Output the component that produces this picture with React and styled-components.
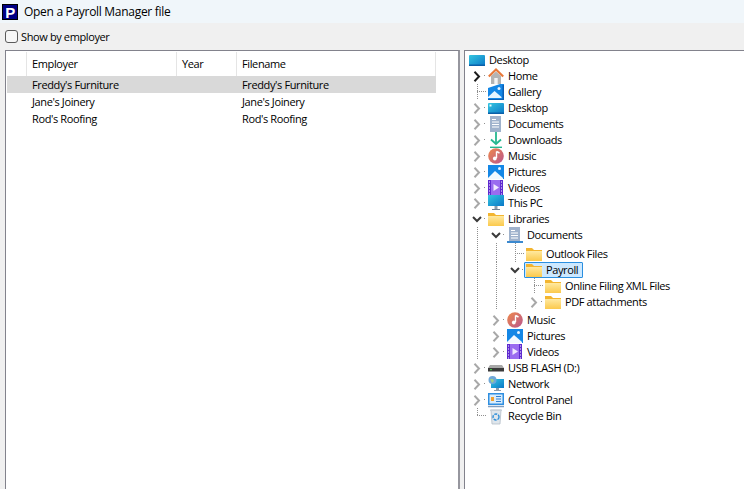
import React from "react";
import styled, { createGlobalStyle } from "styled-components";

const Global = createGlobalStyle`
  html, body { margin: 0; padding: 0; background: #f0f0f0; overflow: hidden; }
  #root { height: 489px; }
`;

const dotsV = "repeating-linear-gradient(to bottom, #8f8f8f 0 1px, transparent 1px 2px)";
const dotsH = "repeating-linear-gradient(to right, #8f8f8f 0 1px, transparent 1px 2px)";

const Window = styled.div`
  width: 744px;
  height: 489px;
  display: flex;
  flex-direction: column;
  overflow: hidden;
  background: #f0f0f0;
  color: #000;
  font-family: "Open Sans", "Noto Sans", sans-serif;
  font-size: 11px;
  letter-spacing: -0.38px;
`;
const TitleBar = styled.div`
  height: 23px;
  flex: none;
  display: flex;
  align-items: center;
  gap: 6px;
  padding-left: 2px;
  background: #f0f6fa;
  font-size: 12px;
  letter-spacing: -0.3px;
`;
const AppLogo = styled.div`
  width: 16px;
  height: 16px;
  background: #000084;
  color: #fff;
  font-family: "Liberation Sans", sans-serif;
  font-weight: 700;
  font-size: 15px;
  line-height: 15px;
  text-align: center;
  box-sizing: border-box;
  border: 1px solid #000;
`;
const Toolbar = styled.label`
  height: 27px;
  flex: none;
  display: flex;
  align-items: center;
  gap: 3px;
  padding-left: 5px;
`;
const Check = styled.input`
  appearance: none;
  width: 13px;
  height: 13px;
  margin: 0;
  box-sizing: border-box;
  border: 1px solid #5a5a5a;
  border-radius: 3px;
  background: #f6f6f6;
`;
const Panes = styled.div`
  flex: 1;
  min-height: 0;
  display: flex;
  gap: 4px;
  padding-left: 5px;
`;
const ListPane = styled.div`
  width: 455px;
  flex: none;
  box-sizing: border-box;
  background: #fff;
  border: solid #82828c;
  border-width: 1px 0 0 1px;
  border-right: 2px solid #96969e;
  padding: 1px 0 0 1px;
`;
const TreePane = styled.div`
  flex: 1;
  background: #fff;
  border: solid #82828c;
  border-width: 1px 0 0 1px;
  padding: 1px 0 0 2px;
`;
const ListRow = styled.div`
  display: grid;
  grid-template-columns: 20px 150px 60px 199px;
  width: 429px;
  height: ${p => (p.$head ? "24px" : "17px")};
  align-items: center;
  background: ${p => (p.$selected ? "#d9d9d9" : "transparent")};
`;
const Cell = styled.div`
  height: 100%;
  display: flex;
  align-items: center;
  box-sizing: border-box;
  padding-left: 5px;
  padding-bottom: ${p => (p.$head ? "2px" : "0")};
  border-right: ${p => (p.$head ? "1px solid #e5e5e5" : "0")};
`;
const TreeRow = styled.div`
  display: flex;
  height: ${p => p.$h}px;
`;
const Guide = styled.span`
  width: 19px;
  flex: none;
  background: ${dotsV} 10px 0 / 1px 100% no-repeat;
`;
const Branch = styled.span`
  width: 19px;
  flex: none;
  background:
    ${dotsH} 10px calc(100% - 8px) / 9px 1px no-repeat,
    ${dotsV} 10px 0 / 1px ${p => (p.$end ? "calc(100% - 8px)" : "100%")} no-repeat;
`;
const Toggle = styled.span`
  width: 19px;
  flex: none;
  display: flex;
  align-items: flex-end;
  background: ${dotsH} 17px calc(100% - 8px) / 2px 1px no-repeat;
`;
const ToggleBox = styled.span`
  width: 13px;
  height: 16px;
  margin-left: 4px;
  display: flex;
  align-items: center;
  justify-content: center;
`;
const Item = styled.span`
  align-self: flex-end;
  height: 16px;
  display: flex;
  align-items: center;
  gap: 4px;
  box-sizing: border-box;
  padding: 0 4px 0 1px;
  border: 1px solid ${p => (p.$selected ? "#2a8fe0" : "transparent")};
  border-radius: 1px;
  background: ${p => (p.$selected ? "#cce8ff" : "transparent")};
  white-space: nowrap;
`;
const Label = styled.span`
  padding-bottom: 2px;
`;
const IconBox = styled.svg`
  width: 16px;
  height: 16px;
  flex: none;
  overflow: visible;
`;

function Chevron({ open, dark }) {
  const color = dark ? "#1c1c1c" : open ? "#3a3a3a" : "#a8a8a8";
  return (
    <svg width="11" height="11" viewBox="0 0 11 11" fill="none" stroke={color} strokeWidth="2">
      {open ? <path d="M1 3 5 7 9 3" /> : <path d="M2.500 .8 7 5.500 2.500 10.200" />}
    </svg>
  );
}

const Defs = () => (
  <svg width="0" height="0" style={{ position: "absolute" }}>
    <defs>
      <linearGradient id="sky" x1="0" y1="0" x2="1" y2="1">
        <stop offset="0" stopColor="#34c6e0" />
        <stop offset="1" stopColor="#0a78c8" />
      </linearGradient>
      <linearGradient id="folder" x1="0" y1="0" x2="0" y2="1">
        <stop offset="0" stopColor="#ffe9a0" />
        <stop offset="1" stopColor="#fbc94c" />
      </linearGradient>
      <linearGradient id="music" x1="0" y1="0" x2="1" y2="1">
        <stop offset="0" stopColor="#f08a4a" />
        <stop offset="1" stopColor="#b8558f" />
      </linearGradient>
    </defs>
  </svg>
);

const Gallery = () => (
  <IconBox viewBox="0 0 16 16">
    <path d="M0 4 12 0h4v15H0z" fill="#1487e6" />
    <path d="M14.500 1H16v14h-1.500z" fill="#0b5fb4" />
    <path d="M0 13 6.500 7l7 6v1H0z" fill="#e6f4ff" />
    <circle cx="11" cy="4.500" r="1.500" fill="#e6f4ff" />
    <path d="M0 15.500h16" stroke="#0b5fb4" />
  </IconBox>
);
const Picture = () => (
  <IconBox viewBox="0 0 16 16">
    <rect x="0" y="1" width="16" height="14" fill="#1487e6" />
    <path d="M0 14 7 7l8 7v1H0z" fill="#f2f9ff" />
    <circle cx="11.500" cy="4.500" r="1.500" fill="#e6f4ff" />
  </IconBox>
);
const Film = () => (
  <IconBox viewBox="0 0 16 16">
    <rect x="0" y="0" width="15" height="15" fill="#9a6cf0" />
    <path d="M0 0h3v15H0zM12 0h3v15h-3z" fill="#5f2ad0" />
    <path d="M1 2h1M1 5h1M1 8h1M1 11h1M1 14h1M13 2h1M13 5h1M13 8h1M13 11h1M13 14h1" stroke="#fff" />
    <path d="M5.500 4 11 7.500 5.500 11z" fill="#f0e8ff" />
  </IconBox>
);
const Note = () => (
  <IconBox viewBox="0 0 16 16">
    <circle cx="8" cy="8" r="7.800" fill="url(#music)" />
    <path d="M8.500 3.500V10" stroke="#fff" strokeWidth="1.400" />
    <path d="M8.500 3.500 11.500 5" stroke="#fff" strokeWidth="1.400" />
    <circle cx="6.800" cy="10.500" r="1.900" fill="#fff" />
  </IconBox>
);
const Sheet = ({ bar }) => (
  <IconBox viewBox="0 0 16 16">
    <rect x="2" y="0" width="11" height={bar ? 14 : 16} fill="#9fb2cc" />
    <path d="M4 3.500H8M4 6H11M4 8.500H11M4 11H11" stroke="#fff" />
    {bar && <path d="M0 15H16" stroke="#0a6cc4" strokeWidth="1.600" />}
  </IconBox>
);
const Folder = () => (
  <IconBox viewBox="0 0 16 16">
    <path d="M0 2h6l2 2h8v11H0z" fill="#f3b52f" />
    <path d="M0 5h16v10H0z" fill="url(#folder)" />
  </IconBox>
);
const Home = () => (
  <IconBox viewBox="0 0 16 16">
    <path d="M3 8 8 3.500 13 8v8H3z" fill="#b4b4b4" />
    <rect x="6.300" y="10" width="3.400" height="6" fill="#f4f4f4" />
    <path d="M.8 8.500 8 1.500l7.200 7" fill="none" stroke="#e8793a" strokeWidth="2.200" />
  </IconBox>
);
const DesktopIcon = ({ plain }) => (
  <IconBox viewBox="0 0 16 16">
    <rect x="0" y="3" width="16" height="11" rx="1" fill="url(#sky)" />
    <path d="M0 12.500h16V14H0z" fill="#0a5fa8" />
    {!plain && <path d="M1.500 4.500h2v2h-2z" fill="#e8fbff" />}
  </IconBox>
);
const Download = () => (
  <IconBox viewBox="0 0 16 16">
    <path d="M8 0v11" stroke="#25b890" strokeWidth="1.800" />
    <path d="M3 7.500 8 12l5-4.500" fill="none" stroke="#25b890" strokeWidth="1.800" />
    <path d="M2 15.300h12" stroke="#25b890" strokeWidth="1.400" />
  </IconBox>
);
const Monitor = () => (
  <IconBox viewBox="0 0 16 16">
    <rect x="0" y="0" width="16" height="11" fill="url(#sky)" />
    <path d="M6.500 11h3v3h-3z" fill="#8a9bab" />
    <path d="M4 14.500h8" stroke="#6f8193" />
  </IconBox>
);
const Drive = () => (
  <IconBox viewBox="0 0 16 16">
    <path d="M2 5h12l2 3H0z" fill="#a8a8a8" />
    <rect x="0" y="8" width="16" height="3.500" fill="#3a3a3a" />
    <path d="M2 9.700h2" stroke="#4be04b" />
  </IconBox>
);
const Network = () => (
  <IconBox viewBox="0 0 16 16">
    <rect x="3" y="3" width="13" height="9" fill="url(#sky)" />
    <path d="M8 12h3v2H8zM6 14h7v1H6z" fill="#8a9bab" />
    <circle cx="4.500" cy="4" r="4" fill="#6fa8d8" />
    <path d="M2 3h3l1 2-2 2z" fill="#9fd08a" />
  </IconBox>
);
const Panel = () => (
  <IconBox viewBox="0 0 16 16">
    <rect x="0" y="1" width="16" height="12" fill="#2f8fe0" />
    <rect x="1.500" y="2.500" width="13" height="9" fill="#d8ecfb" />
    <path d="M3 5h3v4H3z" fill="#f0a030" />
    <path d="M8 4.500h5M8 7h5M8 9.500h5" stroke="#2f7fd0" />
    <path d="M0 14.500h16" stroke="#7f9ec0" strokeWidth="1.500" />
  </IconBox>
);
const Bin = () => (
  <IconBox viewBox="0 0 16 16">
    <path d="M3 2h10l-1 14H4z" fill="#dfe6ec" stroke="#b4bec8" strokeWidth=".8" />
    <path d="M2 1.500h12V3H2z" fill="#c7d0d8" />
    <circle cx="8" cy="9" r="3" fill="none" stroke="#2f8fd8" strokeWidth="1.400" strokeDasharray="3 1" />
  </IconBox>
);

const files = [
  { employer: "Freddy's Furniture", year: "", filename: "Freddy's Furniture", selected: true },
  { employer: "Jane's Joinery", year: "", filename: "Jane's Joinery" },
  { employer: "Rod's Roofing", year: "", filename: "Rod's Roofing" },
];

// guides = how many plain dotted columns come before the branch cell
const tree = [
  { label: "Desktop", icon: DesktopIcon, plain: true, guides: 0, kind: "root" },
  { label: "Home", icon: Home, guides: 0, kind: "closed", dark: true },
  { label: "Gallery", icon: Gallery, guides: 0, kind: "leaf" },
  { label: "Desktop", icon: DesktopIcon, guides: 0, kind: "closed" },
  { label: "Documents", icon: Sheet, guides: 0, kind: "closed" },
  { label: "Downloads", icon: Download, guides: 0, kind: "closed" },
  { label: "Music", icon: Note, guides: 0, kind: "closed" },
  { label: "Pictures", icon: Picture, guides: 0, kind: "closed" },
  { label: "Videos", icon: Film, guides: 0, kind: "closed" },
  { label: "This PC", icon: Monitor, guides: 0, kind: "closed", h: 15 },
  { label: "Libraries", icon: Folder, guides: 0, kind: "open" },
  { label: "Documents", icon: Sheet, bar: true, guides: 1, kind: "open" },
  { label: "Outlook Files", icon: Folder, guides: 2, kind: "leaf", h: 19 },
  { label: "Payroll", icon: Folder, guides: 2, kind: "open", selected: true },
  { label: "Online Filing XML Files", icon: Folder, guides: 3, kind: "leaf" },
  { label: "PDF attachments", icon: Folder, guides: 3, kind: "closed" },
  { label: "Music", icon: Note, guides: 1, kind: "closed", h: 18 },
  { label: "Pictures", icon: Picture, guides: 1, kind: "closed" },
  { label: "Videos", icon: Film, guides: 1, kind: "closed" },
  { label: "USB FLASH (D:)", icon: Drive, guides: 0, kind: "closed" },
  { label: "Network", icon: Network, guides: 0, kind: "closed" },
  { label: "Control Panel", icon: Panel, guides: 0, kind: "closed" },
  { label: "Recycle Bin", icon: Bin, guides: 0, kind: "end" },
];

function TreeLine({ node }) {
  const Icon = node.icon;
  const isToggle = node.kind === "open" || node.kind === "closed";
  return (
    <TreeRow $h={node.h || 16}>
      {Array.from({ length: node.guides }).map((_, i) => <Guide key={i} />)}
      {isToggle && (
        <Toggle>
          <ToggleBox><Chevron open={node.kind === "open"} dark={node.dark} /></ToggleBox>
        </Toggle>
      )}
      {(node.kind === "leaf" || node.kind === "end") && <Branch $end={node.kind === "end"} />}
      <Item $selected={node.selected}>
        <Icon bar={node.bar} plain={node.plain} />
        <Label>{node.label}</Label>
      </Item>
    </TreeRow>
  );
}

export default function App() {
  return (
    <Window>
      <Global />
      <Defs />
      <TitleBar>
        <AppLogo>P</AppLogo>
        Open a Payroll Manager file
      </TitleBar>
      <Toolbar>
        <Check type="checkbox" />
        Show by employer
      </Toolbar>
      <Panes>
        <ListPane>
          <ListRow $head>
            <Cell $head />
            <Cell $head>Employer</Cell>
            <Cell $head>Year</Cell>
            <Cell $head>Filename</Cell>
          </ListRow>
          {files.map(f => (
            <ListRow key={f.employer} $selected={f.selected}>
              <Cell />
              <Cell>{f.employer}</Cell>
              <Cell>{f.year}</Cell>
              <Cell>{f.filename}</Cell>
            </ListRow>
          ))}
        </ListPane>
        <TreePane>
          {tree.map((node, i) => <TreeLine key={i} node={node} />)}
        </TreePane>
      </Panes>
    </Window>
  );
}
